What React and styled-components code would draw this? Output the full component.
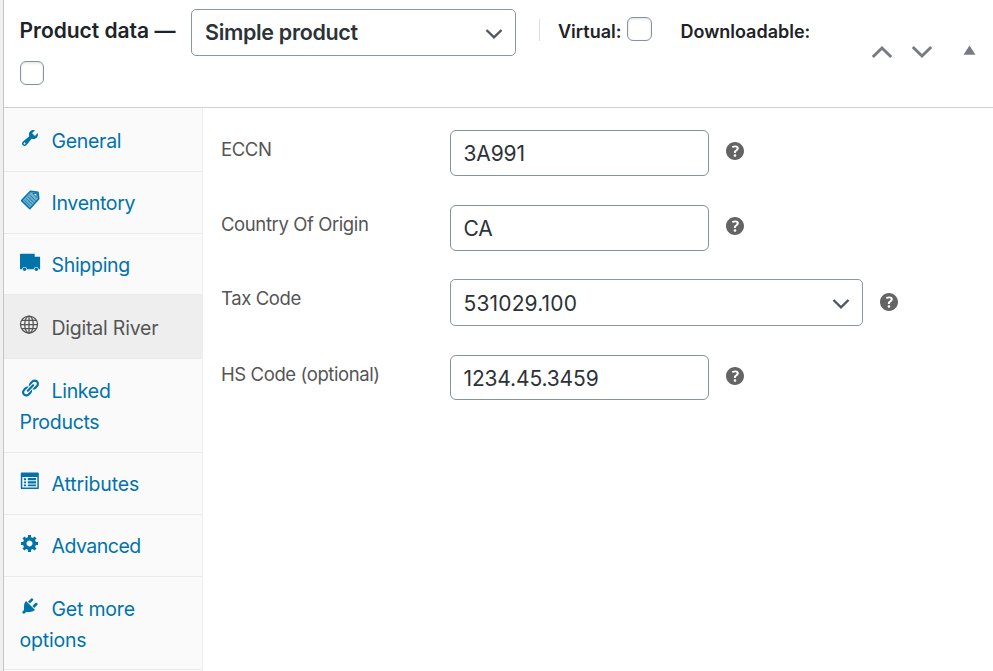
import React from "react";
import styled, { createGlobalStyle, css } from "styled-components";

const Global = createGlobalStyle`
  *, *::before, *::after { box-sizing: border-box; }
  body { margin: 0; background: #f0f0f1; overflow: hidden; font-family: Inter, "Liberation Sans", sans-serif; color: #2c3338; }
`;

const Panel = styled.main`
  margin-left: 3px;
  height: 671px;
  border-left: 1px solid #c3c4c7;
  background: #fff;
  display: flex;
  flex-direction: column;
  overflow: hidden;
`;

const Header = styled.header`
  flex: none;
  display: flex;
  height: 108px;
  border-bottom: 1px solid #cfd0d4;
`;

const HeaderMain = styled.div`
  flex: 1;
  padding: 9px 0 0 15.5px;
`;

const HeaderLine = styled.div`
  display: flex;
  align-items: flex-start;
  height: 51.5px;
`;

const Title = styled.h2`
  margin: 0;
  width: 171.5px;
  padding-top: 6px;
  font-size: 21px;
  line-height: 32px;
  font-weight: 600;
  letter-spacing: -0.02px;
  color: #1d2327;
  white-space: nowrap;
`;

const SelectWrap = styled.div`
  display: grid;
  grid-template-columns: 1fr 18px;
  align-items: center;
  width: ${(p) => p.$width}px;
  height: 47px;
  padding-right: 12px;
  border: 1px solid #8c96a1;
  border-radius: 5px;
  background: #fff;
`;

const Select = styled.select`
  appearance: none;
  grid-area: 1 / 1 / 2 / 3;
  height: 45px;
  padding: ${(p) => (p.$strong ? "0 0 1px 13px" : "2px 0 0 13px")};
  border: 0;
  background: transparent;
  font-family: inherit;
  font-size: ${(p) => (p.$strong ? 21.5 : 21)}px;
  font-weight: ${(p) => (p.$strong ? 600 : 400)};
  letter-spacing: ${(p) => p.$spacing};
  color: #2c3338;
`;

const SelectArrow = styled.svg`
  grid-area: 1 / 2;
  width: 18px;
  height: 18px;
  margin-top: 3px;
  pointer-events: none;
`;

const Flag = styled.label`
  display: flex;
  align-items: flex-start;
  gap: 6px;
  margin-right: 28.5px;
  font-size: 18px;
  line-height: 26px;
  font-weight: 600;
  color: #1d2327;
  white-space: nowrap;

  span { padding-top: 9.5px; }
`;

const Divider = styled.i`
  width: 1px;
  height: 22px;
  margin: 10px 18px 0 23px;
  background: #dcdcde;
`;

const Checkbox = styled.input`
  appearance: none;
  display: block;
  flex: none;
  width: 24.5px;
  height: 24.5px;
  margin: ${(p) => p.$top || 0}px 0 0;
  border: 1px solid #8491a0;
  border-radius: 6px;
  background: #fff;
  box-shadow: inset 0 1px 3px rgba(0, 0, 0, 0.12);
`;

const HandleActions = styled.div`
  display: flex;
  align-items: center;
  height: 103px;
  padding-right: 17px;
`;

const Chevron = styled.svg`
  width: 22px;
  height: 14px;
  margin-right: 17.5px;
`;

const Toggle = styled.svg`
  width: 13px;
  height: 10px;
  margin: 0 0 3px 13px;
`;

const Body = styled.div`
  flex: 1;
  display: flex;
  min-height: 0;
`;

const Tabs = styled.ul`
  width: 199px;
  flex: none;
  margin: 0;
  padding: 0;
  list-style: none;
  background: #fafafa;
  border-right: 1px solid #eee;
`;

const Tab = styled.li`
  height: ${(p) => p.$height}px;
  padding: ${(p) => p.$top || 16}px 16px 0 15.5px;
  border-bottom: 1px solid #eaeaea;
  font-size: 19.5px;
  line-height: 31px;
  letter-spacing: ${(p) => p.$spacing || "-0.3px"};
  color: #0073aa;
  ${(p) =>
    p.$active &&
    css`
      color: #555;
      background: #eee;
    `}
`;

const TabIcon = styled.svg`
  display: inline-block;
  width: 21px;
  height: 20px;
  margin-right: 11px;
  vertical-align: 0;
  fill: currentColor;
  overflow: visible;
`;

const Fields = styled.form`
  flex: 1;
  padding: 22px 0 0 18px;
`;

const Field = styled.div`
  display: flex;
  align-items: flex-start;
  height: ${(p) => p.$height}px;
`;

const Label = styled.label`
  width: 228.5px;
  padding-top: 6px;
  font-size: 18.5px;
  line-height: 26px;
  letter-spacing: -0.4px;
  color: #555;
`;

const TextInput = styled.input`
  width: 259px;
  height: ${(p) => p.$height || 46}px;
  padding: ${(p) => p.$shift || 0}px 13px 0;
  border: 1px solid #8491a0;
  border-radius: 6px;
  background: #fff;
  font-family: inherit;
  font-size: 21px;
  letter-spacing: -0.15px;
  color: #2c3338;
`;

const HelpIcon = styled.svg`
  width: 18px;
  height: 18px;
  margin: ${(p) => (p.$select ? 13.5 : 12.4)}px 0 0 17px;
  fill: #646464;
`;

const WRENCH =
  "M16.68 9.77c-1.34 1.34-3.3 1.67-4.95.99l-5.41 6.52c-.99.99-2.59.99-3.58 0s-.99-2.59 0-3.57l6.52-5.42c-.68-1.65-.35-3.61.99-4.95 1.28-1.28 3.12-1.62 4.72-1.06l-2.89 2.89 2.82 2.82 2.86-2.87c.53 1.58.18 3.39-1.08 4.65zM3.81 16.21c.4.39 1.04.39 1.43 0 .4-.4.4-1.04 0-1.43-.39-.4-1.03-.4-1.43 0-.39.39-.39 1.03 0 1.43z";
const LINK =
  "M17.74 2.76c1.68 1.69 1.68 4.41 0 6.1l-1.53 1.52c-1.12 1.12-2.7 1.47-4.14 1.09l2.62-2.61.76-.77.76-.76c.84-.84.84-2.2 0-3.04-.84-.85-2.2-.85-3.04 0l-.77.76-3.38 3.38c-.37-1.44-.02-3.02 1.1-4.14l1.52-1.53c1.69-1.68 4.42-1.68 6.1 0zM8.59 13.43l5.34-5.34c.42-.42.42-1.1 0-1.52-.44-.43-1.13-.39-1.53 0l-5.33 5.34c-.42.42-.42 1.1 0 1.52.44.43 1.13.39 1.52 0zm-.76 2.29l4.14-4.15c.38 1.44.03 3.02-1.09 4.14l-1.52 1.53c-1.69 1.68-4.41 1.68-6.1 0-1.68-1.68-1.68-4.42 0-6.1l1.53-1.52c1.12-1.12 2.7-1.47 4.14-1.1l-4.14 4.15c-.85.84-.85 2.2 0 3.05.84.84 2.2.84 3.04 0z";
const PLUG =
  "M13.11 4.36L9.87 7.6 8 5.73l3.24-3.24c.35-.34 1.05-.2 1.56.32.52.51.66 1.21.31 1.55zm-8 1.77l.91-1.12 9.01 9.01-1.19.84c-.71.71-2.63 1.16-3.82 1.16H6.14L4.9 17.26c-.59.59-1.54.59-2.12 0-.59-.58-.59-1.53 0-2.12l1.24-1.24v-3.88c0-1.13.4-3.19 1.09-3.89zm7.26 3.97l3.24-3.24c.34-.35 1.04-.21 1.55.31.52.51.66 1.21.31 1.55l-3.24 3.25z";
const GEAR =
  "M18 12h-2.18c-.17.7-.44 1.35-.81 1.93l1.54 1.54-2.1 2.1-1.54-1.54c-.58.36-1.23.63-1.91.79V19H8v-2.18c-.68-.16-1.33-.43-1.91-.79l-1.54 1.54-2.12-2.12 1.54-1.54c-.36-.58-.63-1.23-.79-1.91H1V9.03h2.17c.16-.7.44-1.35.8-1.94L2.43 5.55l2.1-2.1 1.54 1.54c.58-.37 1.24-.64 1.93-.81V2h3v2.18c.68.16 1.33.43 1.91.79l1.54-1.54 2.12 2.12-1.54 1.54c.36.59.64 1.24.8 1.94H18V12zm-8.5 1.5c1.66 0 3-1.34 3-3s-1.34-3-3-3-3 1.34-3 3 1.34 3 3 3z";
const HELP =
  "M17 10c0-3.87-3.14-7-7-7-3.87 0-7 3.13-7 7s3.13 7 7 7c3.86 0 7-3.13 7-7zm-6.3 1.48H9.14v-.43c0-.38.08-.7.24-.98s.46-.57.88-.89c.41-.29.68-.53.81-.71.14-.18.2-.39.2-.62 0-.25-.09-.44-.28-.58-.19-.13-.45-.19-.79-.19-.58 0-1.25.19-2 .57l-.64-1.28c.87-.49 1.8-.74 2.77-.74.81 0 1.45.2 1.92.58.48.39.71.91.71 1.55 0 .43-.09.8-.29 1.11-.19.32-.57.67-1.11 1.06-.38.28-.61.49-.71.63-.1.15-.15.34-.15.57v.35zm-1.47 2.74c-.18-.17-.27-.42-.27-.73 0-.33.08-.58.26-.75s.43-.25.77-.25c.32 0 .57.09.75.26s.27.42.27.74c0 .3-.09.55-.27.72-.18.18-.43.27-.75.27-.33 0-.58-.09-.76-.26z";

const icons = {
  general: <path d={WRENCH} />,
  inventory: (
    <g fill="none" stroke="currentColor" strokeLinejoin="round">
      <path d="M1.6 10.6 L10.4 1.2 L18 2.2 L18.8 8.8 L9.8 18.8 Z" strokeWidth="1.5" fill="currentColor" fillOpacity=".55" />
      <path d="M4.5 10.2l6 6M6.2 8.4l6 6M7.9 6.6l6 6M9.6 4.8l6 6" strokeWidth=".9" />
      <path d="M12.8 3.4h4.1v4z" fill="#fafafa" strokeWidth="1" />
    </g>
  ),
  shipping: (
    <g>
      <path d="M.8 1.7h13.9v3.1h5.4v12.4H18.900a2.6 2.6 0 0 0-5.1 0H7.1a2.6 2.6 0 0 0-5.1 0H0V2.5a.8.8 0 0 1 .8-.8z" />
      <circle cx="4.55" cy="17.3" r="1.7" />
      <circle cx="16.35" cy="17.3" r="1.7" />
    </g>
  ),
  river: (
    <g fill="none" stroke="currentColor" strokeWidth="1.25">
      <circle cx="9" cy="9.500" r="8.5" />
      <ellipse cx="9" cy="9.500" rx="4.3" ry="8.5" />
      <path d="M9 1v17M.5 9.500h17M1.700 5.300h14.6M1.700 13.700h14.6" />
    </g>
  ),
  linked: <path d={LINK} />,
  attributes: (
    <g>
      <path
        fillRule="evenodd"
        d="M1.7 1.5h16.2a.9.9 0 0 1 .9.9v14.8a.9.9 0 0 1-.9.9H1.7a.9.9 0 0 1-.9-.9V2.4a.9.9 0 0 1 .9-.9zM2.3 6v10.5h15V6z"
      />
      <path d="M3.9 7.3h2.2v2H3.9zM3.9 10.5h2.2v1.8H3.9zM3.9 13.5h2.2v1.8H3.9zM7.8 7.1H16v2.2H7.8zM7.8 10.3H16v2.2H7.8zM7.8 13.4H16v1.9H7.8z" />
    </g>
  ),
  advanced: <path d={GEAR} />,
  more: <path d={PLUG} />,
};

const tabs = [
  { id: "general", label: "General", height: 63.6, top: 17.5 },
  { id: "inventory", label: "Inventory", height: 62.2, top: 16.5 },
  { id: "shipping", label: "Shipping", height: 61.7 },
  { id: "river", label: "Digital River", height: 63.5, active: true, top: 17.5, spacing: "-0.22px" },
  { id: "linked", label: "Linked Products", height: 94, top: 17 },
  { id: "attributes", label: "Attributes", height: 62, top: 16.5, spacing: "-0.15px" },
  { id: "advanced", label: "Advanced", height: 62, top: 16.5, spacing: "-0.5px" },
  { id: "more", label: "Get more options", height: 93, top: 17.5, spacing: "-0.2px" },
];

const fields = [
  { label: "ECCN", value: "3A991", height: 75, control: 45.5, shift: 1 },
  { label: "Country Of Origin", value: "CA", height: 74 },
  { label: "Tax Code", value: "531029.100", height: 76, select: true },
  { label: "HS Code (optional)", value: "1234.45.3459", height: 46, control: 45, shift: 1 },
];

function Arrow() {
  return (
    <SelectArrow viewBox="0 0 18 18" fill="none" stroke="#50575e" strokeWidth="2.4">
      <path d="M1.5 5l7.5 7.3L16.5 5" />
    </SelectArrow>
  );
}

export default function App() {
  return (
    <>
      <Global />
      <Panel>
        <Header>
          <HeaderMain>
            <HeaderLine>
              <Title>Product data —</Title>
              <SelectWrap $width={325}>
                <Select $strong $spacing="-0.33px">
                  <option>Simple product</option>
                </Select>
                <Arrow />
              </SelectWrap>
              <Divider />
              <Flag>
                <span>Virtual:</span>
                <Checkbox type="checkbox" $top={7.5} />
              </Flag>
              <Flag>
                <span>Downloadable:</span>
              </Flag>
            </HeaderLine>
            <Checkbox type="checkbox" aria-label="Downloadable" />
          </HeaderMain>
          <HandleActions>
            <Chevron viewBox="0 0 22 14" fill="none" stroke="#787c82" strokeWidth="3">
              <path d="M1.8 12 11 3l9.2 9" />
            </Chevron>
            <Chevron viewBox="0 0 22 14" fill="none" stroke="#787c82" strokeWidth="3">
              <path d="M1.8 2 11 11l9.2-9" />
            </Chevron>
            <Toggle viewBox="0 0 13 10" fill="#787c82">
              <path d="M6.5 0.5 12.5 9.8H0.5z" />
            </Toggle>
          </HandleActions>
        </Header>
        <Body>
          <Tabs>
            {tabs.map((t) => (
              <Tab key={t.id} $height={t.height} $active={t.active} $top={t.top} $spacing={t.spacing}>
                <TabIcon viewBox="0 0 21 20">{icons[t.id]}</TabIcon>
                {t.label}
              </Tab>
            ))}
          </Tabs>
          <Fields>
            {fields.map((f) => (
              <Field key={f.label} $height={f.height}>
                <Label>{f.label}</Label>
                {f.select ? (
                  <SelectWrap $width={413}>
                    <Select $spacing="0.15px">
                      <option>{f.value}</option>
                    </Select>
                    <Arrow />
                  </SelectWrap>
                ) : (
                  <TextInput defaultValue={f.value} $height={f.control} $shift={f.shift} />
                )}
                <HelpIcon viewBox="3 3 14 14" $select={f.select}>
                  <path d={HELP} />
                </HelpIcon>
              </Field>
            ))}
          </Fields>
        </Body>
      </Panel>
    </>
  );
}
